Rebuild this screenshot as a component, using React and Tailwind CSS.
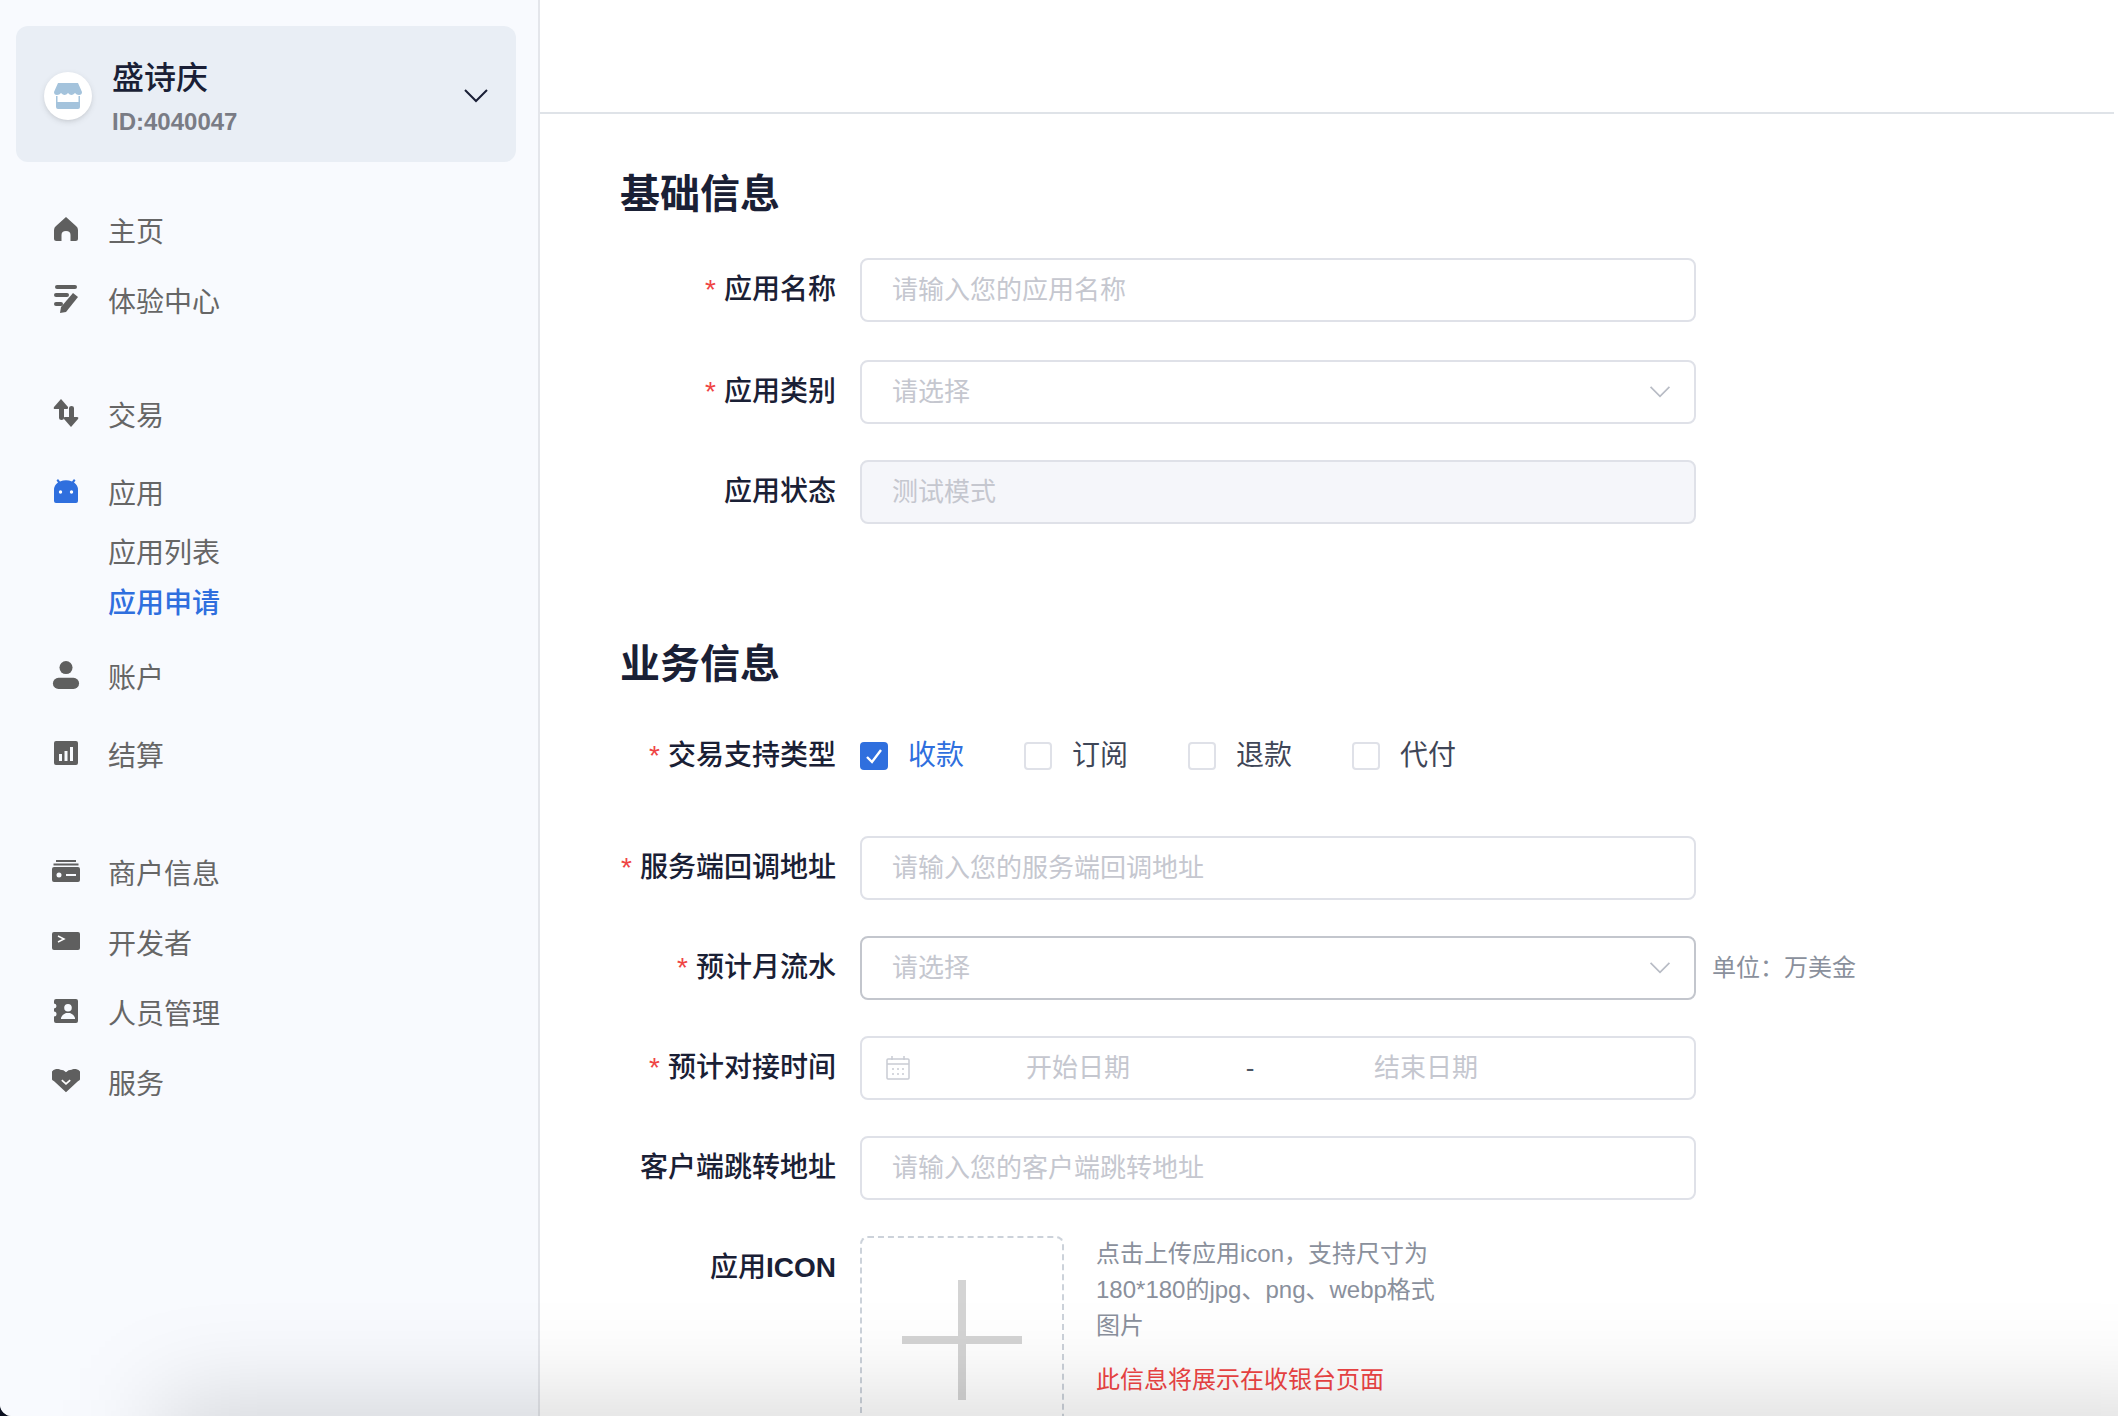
import React from "react";

const Home = () => (
  <svg viewBox="0 0 24 24" className="w-3 h-3 fill-current">
    <path d="M12 0 L22 9 Q24 10.5 24 13 V21.5 Q24 24 21.5 24 H16.5 V18 Q16.5 14 12 14 Q7.5 14 7.5 18 V24 H2.5 Q0 24 0 21.5 V13 Q0 10.5 2 9 Z" />
  </svg>
);
const Note = () => (
  <svg viewBox="0 0 24 28" className="w-3 h-3.5 fill-current">
    <rect x="1" y="0" width="22" height="4" rx="2" />
    <rect x="0" y="8" width="15" height="4" rx="2" />
    <rect x="0" y="17" width="9" height="4" rx="2" />
    <path d="M19 8 L24 12 L12 27 L6 28 L7 22 Z" />
  </svg>
);
const Arrows = () => (
  <svg viewBox="0 0 26 28" className="w-3.5 h-3.5 fill-current">
    <path d="M8 0 L15 8 Q15.5 10 14 10 H11 V19 Q11 21 8.5 21 Q6 21 6 19 V10 H2 Q0 10 1 8 Z" />
    <path d="M18 28 L25 20 Q26 18 24 18 H21 V9 Q21 7 18.500 7 Q16 7 16 9 V18 H12 Q10 18 11 20 Z" />
  </svg>
);
const Android = () => (
  <svg viewBox="0 0 24 24" className="w-3 h-3 fill-current">
    <path d="M0 11 Q0 6 4 3.500 L2.500 1.500 L4 0 L6 2.500 Q12 0 18 2.500 L20 0 L21.500 1.500 L20 3.500 Q24 6 24 11 V22 Q24 24 22 24 H2 Q0 24 0 22 Z" />
    <circle cx="6.500" cy="13" r="1.700" fill="#fff" />
    <circle cx="17.500" cy="13" r="1.700" fill="#fff" />
  </svg>
);
const User = () => (
  <svg viewBox="0 0 28 30" className="w-3.5 h-3.5 fill-current">
    <circle cx="14" cy="7" r="7" />
    <rect x="0" y="18" width="28" height="12" rx="6" />
  </svg>
);
const Chart = () => (
  <svg viewBox="0 0 24 24" className="w-3 h-3 fill-current">
    <path fillRule="evenodd" d="M2 0 H22 Q24 0 24 2 V22 Q24 24 22 24 H2 Q0 24 0 22 V2 Q0 0 2 0 Z M5 13 V20 H8 V13 Z M10.500 10 V20 H13.500 V10 Z M16 6 V20 H19 V6 Z" />
  </svg>
);
const Wallet = () => (
  <svg viewBox="0 0 28 22" className="w-3.5 h-3 fill-current">
    <path d="M4 0 H24 V2 H4 Z M1.500 3.500 H26.500 V5.500 H1.500 Z" />
    <path fillRule="evenodd" d="M2 7 H26 Q28 7 28 9 V20 Q28 22 26 22 H2 Q0 22 0 20 V9 Q0 7 2 7 Z M7 12.500 A2.500 2.500 0 1 0 7 17.500 A2.500 2.500 0 1 0 7 12.500 Z M14 14 V16 H24 V14 Z" />
  </svg>
);
const Terminal = () => (
  <svg viewBox="0 0 28 18" className="w-3.5 h-2.5 fill-current">
    <rect width="28" height="18" rx="2" />
    <path d="M6 4 L12 7 L6 10" fill="none" stroke="#fff" strokeWidth="1.500" />
  </svg>
);
const Contact = () => (
  <svg viewBox="0 0 24 24" className="w-3 h-3 fill-current">
    <path fillRule="evenodd" d="M2 0 H22 Q24 0 24 2 V22 Q24 24 22 24 H2 Q0 24 0 22 V17.500 A2.500 2.500 0 0 0 0 12.500 V9.500 A2.500 2.500 0 0 0 0 4.500 V2 Q0 0 2 0 Z M14 5 A3.800 3.800 0 1 0 14 12.600 A3.800 3.800 0 1 0 14 5 Z M7 20 H21 V19 Q20 15.500 16 14 H12 Q8 15.500 7 19 Z" />
  </svg>
);
const Heart = () => (
  <svg viewBox="0 0 30 24" className="w-3.5 h-3 fill-current">
    <path d="M15 24 L2 12 A6.800 6.800 0 0 1 9 0 Q12.500 0 15 2.500 Q17.500 0 21 0 A6.800 6.800 0 0 1 28 12 Z" />
    <path d="M10.500 11 L15 15 L19.500 11" fill="none" stroke="#fff" strokeWidth="1.800" />
  </svg>
);
const Store = () => (
  <svg viewBox="0 0 28 26" className="w-3.5 h-3.5 fill-[#a4c3dc]">
    <path d="M4 0 H24 L28 9 Q28 12 25 12 Q22.500 12 21 10 Q19 12 17.500 12 Q15.500 12 14 10 Q12.500 12 10.500 12 Q9 12 7 10 Q5.500 12 3 12 Q0 12 0 9 Z" />
    <path d="M2 13 H3.500 V19 H24.500 V13 H26 V24 Q26 26 24 26 H4 Q2 26 2 24 Z" />
  </svg>
);
const Chevron = ({ className }) => (
  <svg viewBox="0 0 24 14" fill="none" stroke="currentColor" strokeWidth="2" className={className}>
    <path d="M1 1 L12 12 L23 1" />
  </svg>
);
const Calendar = () => (
  <svg viewBox="0 0 24 24" fill="none" stroke="#c9ccd3" strokeWidth="1.500" className="w-3 h-3">
    <rect x="1" y="3" width="22" height="20" rx="1" />
    <path d="M1 8 H23 M6 0 V4 M18 0 V4" />
    <path d="M6 13 H8 M11 13 H13 M16 13 H18 M6 18 H8 M11 18 H13 M16 18 H18" />
  </svg>
);

const NavItem = ({ icon, label, active, className = "" }) => (
  <div className={`flex h-8.75 items-center ${className}`}>
    <div className={`-mt-1 flex w-7.5 justify-center ${active ? "text-[#2f6fde]" : "text-[#5f5f5f]"}`}>{icon}</div>
    <span className="ml-1.5 text-sm text-[#666666]">{label}</span>
  </div>
);

const Row = ({ label, required, children, className = "" }) => (
  <div className={`flex gap-3 ${className}`}>
    <div className="flex w-27 shrink-0 justify-end text-sm leading-8 font-medium whitespace-nowrap text-[#1a2035]">
      {required && <span className="mr-1 text-[#ef4444]">*</span>}
      {label}
    </div>
    {children}
  </div>
);

const tones = {
  plain: "border-[#dfe1e8] bg-white px-3.75",
  disabled: "border-[#dfe1e8] bg-[#f5f6fa] px-3.75",
  hover: "border-[#c3c6cd] bg-white px-3.75",
  range: "border-[#dfe1e8] bg-white px-3",
};

const Field = ({ children, tone = "plain", className = "" }) => (
  <div className={`flex h-8 w-[418px] items-center rounded border text-[13px] text-[#c5c7cf] ${tones[tone]} ${className}`}>
    {children}
  </div>
);

const Check = ({ label, checked }) => (
  <div className="flex w-20.5 items-center gap-2.5">
    {checked ? (
      <div className="flex h-3.5 w-3.5 items-center justify-center rounded-xs bg-[#2f6fde]">
        <svg viewBox="0 0 14 14" fill="none" stroke="#fff" strokeWidth="1.200" className="h-3.5 w-3.5">
          <path d="M3.500 7.500 L6 10 L10.500 4" />
        </svg>
      </div>
    ) : (
      <div className="h-3.5 w-3.5 rounded-xs border border-[#dfe1e8] bg-white" />
    )}
    <span className={`text-sm ${checked ? "text-[#2f6fde]" : "text-[#3f4657]"}`}>{label}</span>
  </div>
);

export default function App() {
  return (
    <div className="relative h-screen w-screen overflow-hidden bg-[#0b1020]">
      <div className="flex h-full overflow-hidden rounded-bl-md bg-white font-['Liberation_Sans','Noto_Sans_CJK_SC',sans-serif] [zoom:2]">
        <aside className="w-[270px] shrink-0 border-r border-[#e4e6eb] bg-[#f8fafe] pt-3">
          <div className="ml-2 mt-px flex w-62.5 items-center rounded-md bg-[#e9eef5] pt-3.5 pb-3 pl-3.5 pr-3.5">
            <div className="flex h-6 w-6 items-center justify-center rounded-full bg-white shadow">
              <Store />
            </div>
            <div className="ml-2.5 flex-1">
              <div className="text-base font-medium text-[#1a1f36]">盛诗庆</div>
              <div className="mt-0.5 text-xs font-semibold text-[#7a7c85]">ID:4040047</div>
            </div>
            <Chevron className="h-2 w-3 text-[#1a1f36]" />
          </div>

          <nav className="mt-4.5 pl-4.5">
            <NavItem icon={<Home />} label="主页" />
            <NavItem icon={<Note />} label="体验中心" />
            <NavItem icon={<Arrows />} label="交易" className="mt-5.5" />
            <NavItem icon={<Android />} label="应用" active className="mt-1" />
            <div className="flex h-6 items-center pl-9 text-sm text-[#666666]">应用列表</div>
            <div className="mt-px flex h-6 items-center pl-9 text-sm font-medium text-[#2f6fde]">应用申请</div>
            <NavItem icon={<User />} label="账户" className="mt-2" />
            <NavItem icon={<Chart />} label="结算" className="mt-1" />
            <NavItem icon={<Wallet />} label="商户信息" className="mt-6" />
            <NavItem icon={<Terminal />} label="开发者" />
            <NavItem icon={<Contact />} label="人员管理" />
            <NavItem icon={<Heart />} label="服务" />
          </nav>
        </aside>

        <main className="flex-1">
          <div className="mr-0.5 box-content h-14 border-b border-[#dfe3e8]" />
          <div className="pt-6.5 pl-10">
            <h2 className="text-xl font-bold text-[#1a2035]">基础信息</h2>
            <div className="mt-4.5 flex flex-col gap-4.5">
              <Row label="应用名称" required>
                <Field>请输入您的应用名称</Field>
              </Row>
              <Row label="应用类别" required className="mt-px">
                <Field className="justify-between">
                  请选择
                  <Chevron className="-mr-1 h-1.5 w-3 text-[#b8bcc5]" />
                </Field>
              </Row>
              <Row label="应用状态">
                <Field tone="disabled">测试模式</Field>
              </Row>
            </div>

            <h2 className="mt-14 text-xl font-bold text-[#1a2035]">业务信息</h2>
            <div className="mt-4.5 flex flex-col gap-4.5">
              <div className="mb-2 flex h-7 items-center gap-3">
                <div className="flex w-27 justify-end text-sm font-medium whitespace-nowrap text-[#1a2035]">
                  <span className="mr-1 text-[#ef4444]">*</span>交易支持类型
                </div>
                <div className="flex">
                  <Check label="收款" checked />
                  <Check label="订阅" />
                  <Check label="退款" />
                  <Check label="代付" />
                </div>
              </div>
              <Row label="服务端回调地址" required>
                <Field>请输入您的服务端回调地址</Field>
              </Row>
              <Row label="预计月流水" required>
                <Field tone="hover" className="justify-between">
                  请选择
                  <Chevron className="-mr-1 h-1.5 w-3 text-[#b8bcc5]" />
                </Field>
                <div className="-ml-1 text-xs leading-8 text-[#8a909c]">单位：万美金</div>
              </Row>
              <Row label="预计对接时间" required>
                <Field tone="range">
                  <Calendar />
                  <div className="ml-1 w-40 text-center">开始日期</div>
                  <div className="w-3 text-center text-[#4b5563]">-</div>
                  <div className="ml-0.5 w-40 text-center">结束日期</div>
                </Field>
              </Row>
              <Row label="客户端跳转地址">
                <Field>请输入您的客户端跳转地址</Field>
              </Row>
              <Row label={<>应用<span className="font-bold">ICON</span></>}>
                <div className="flex h-25 w-25.5 shrink-0 items-center justify-center rounded border border-dashed border-[#ccd2da]">
                  <div className="relative mt-1 h-15 w-15">
                    <div className="absolute inset-x-0 top-7 h-1 bg-[#d4d4d4]" />
                    <div className="absolute inset-y-0 left-7 w-1 bg-[#d4d4d4]" />
                  </div>
                </div>
                <div className="ml-1 w-44">
                  <p className="text-xs leading-[18px] text-[#8a909c]">点击上传应用icon，支持尺寸为180*180的jpg、png、webp格式图片</p>
                  <p className="mt-2.5 text-xs whitespace-nowrap text-[#ef4444]">此信息将展示在收银台页面</p>
                </div>
              </Row>
            </div>
          </div>
        </main>
        <div className="absolute -bottom-12 left-20 -right-10 h-14 bg-black/15 blur-xl" />
      </div>
    </div>
  );
}
